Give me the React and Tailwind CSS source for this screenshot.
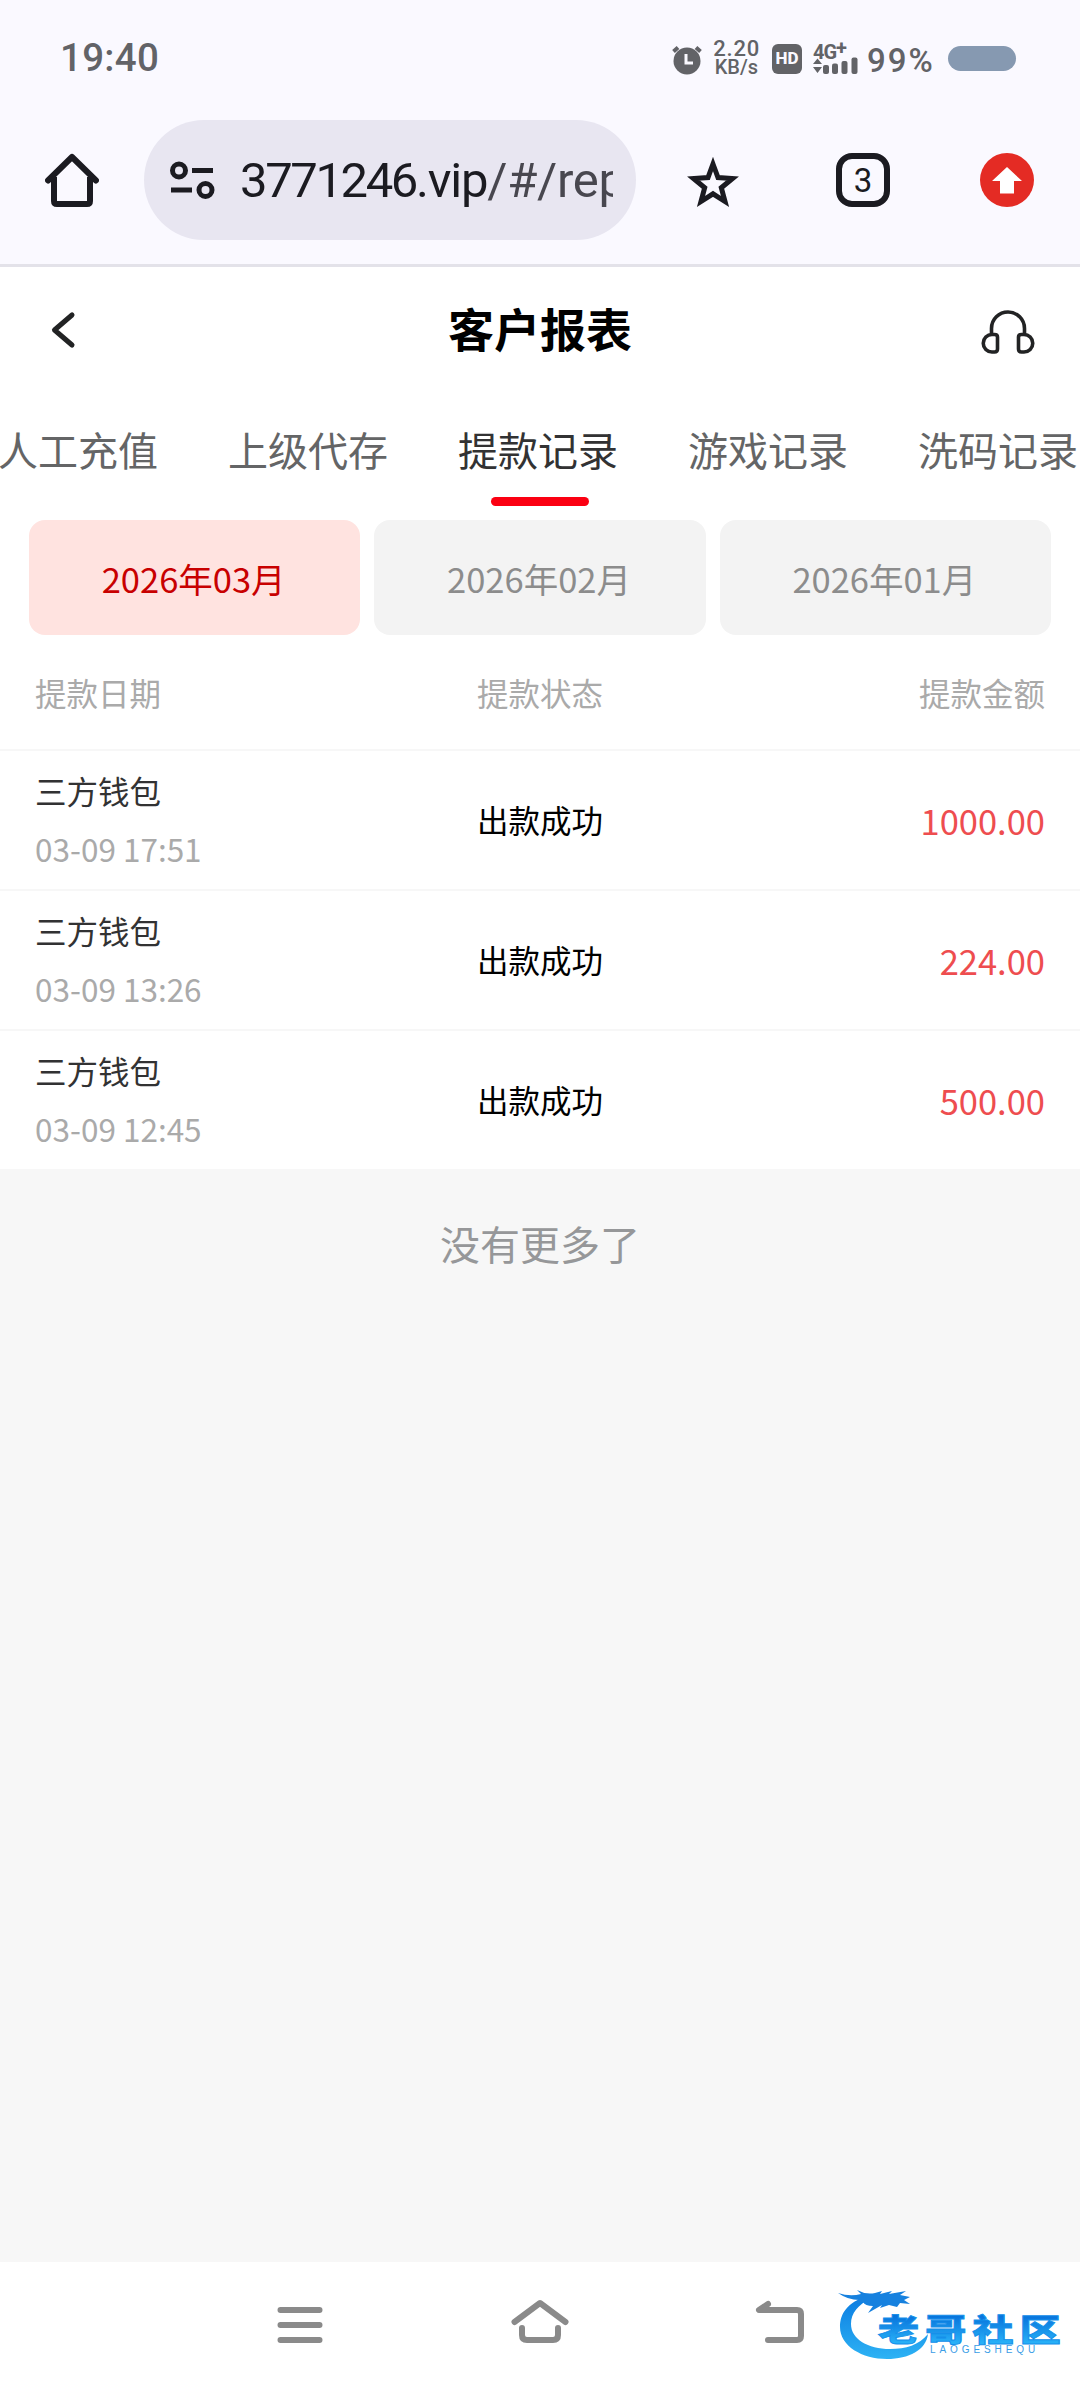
import React, { useState } from 'react';

const tabs = ['人工充值', '上级代存', '提款记录', '游戏记录', '洗码记录'];
const months = ['2026年03月', '2026年02月', '2026年01月'];
const records = [
    { id: 1, name: '三方钱包', time: '03-09 17:51', status: '出款成功', amount: 1000 },
    { id: 2, name: '三方钱包', time: '03-09 13:26', status: '出款成功', amount: 224 },
    { id: 3, name: '三方钱包', time: '03-09 12:45', status: '出款成功', amount: 500 },
];

const StatusBar = () => (
    <div className="flex h-[120px] items-start justify-between pl-[60px] pr-16 text-[#626367]">
        <span className="mt-[35px] text-[38.5px] leading-[46px] font-medium tracking-[0.3px]">19:40</span>
        <div className="mt-[37px] flex h-11 items-start">
            <svg className="mt-2 h-[30px] w-[30px]" viewBox="0 0 30 30" fill="none">
                <circle cx="15" cy="16" r="13.5" fill="currentColor" />
                <path d="M1.5 6.5 6 2.5M28.5 6.5 24 2.5" stroke="currentColor" strokeWidth="4" />
                <path d="M14 9v9h7" stroke="#faf9ff" strokeWidth="3" />
            </svg>
            <div className="mt-0.5 ml-[11px] w-[47px] text-right text-[22px] leading-[19px] font-medium">
                <div className="tracking-[0.8px]">2.20</div>
                <div className="pr-0.5 text-[20px]">KB/s</div>
            </div>
            <div className="mt-[7px] ml-3 flex h-[30px] w-[30px] items-center justify-center rounded-md bg-[#626367] text-[17px] font-extrabold text-[#faf9ff]">
                HD
            </div>
            <div className="ml-[11px] w-[46px]">
                <div className="mt-[5px] h-[18px] text-[20px] leading-[20px] font-bold tracking-[-1px]">
                    4G<span className="relative -top-1">+</span>
                </div>
                <svg className="-mt-1 h-[19px] w-[46px]" viewBox="0 0 46 19" fill="currentColor">
                    <path d="M0 8 4.5 2.5 9 8ZM0 11h9L4.5 17Z" />
                    <rect x="10" y="9" width="6" height="9" rx="2" />
                    <rect x="19" y="7.5" width="6" height="10.5" rx="2" />
                    <rect x="28.5" y="5" width="6" height="13" rx="2" />
                    <rect x="38.5" y="1.5" width="6" height="16.5" rx="2" />
                </svg>
            </div>
            <span className="ml-2 w-[71px] text-[33px] leading-[48px] font-medium tracking-[2px]">99%</span>
            <div className="mt-[9px] ml-2.5 h-[25px] w-[68px] rounded-full bg-[#8699b1]" />
        </div>
    </div>
);

const AddressBar = () => (
    <div className="flex h-36 items-start pl-[45px]">
        <svg className="mt-[33px] h-[54px] w-[54px]" viewBox="0 0 54 54" fill="none" stroke="#1b1b21" strokeWidth="6">
            <path d="M9 24v24q0 3 3 3h30q3 0 3-3V24" />
            <path d="M3 27.5 27 4l24 23.5" strokeLinecap="round" strokeLinejoin="round" />
        </svg>
        <div className="ml-[45px] flex h-[120px] w-[492px] items-center rounded-full bg-[#e8e6f1] pl-[25px]">
            <svg className="h-10 w-[46px] shrink-0" viewBox="0 0 46 40" fill="none" stroke="#1b1b21" strokeWidth="5">
                <circle cx="10" cy="10.5" r="6.5" />
                <path d="M23 10.5h21M2 30h21" />
                <circle cx="36.5" cy="30" r="6.5" />
            </svg>
            <div className="ml-[25px] w-[373px] overflow-hidden pt-0.5 text-[49px] leading-[60px] whitespace-nowrap text-[#1b1b21]">
                <span className="tracking-[-2.4px]">3771246</span>
                <span className="tracking-[-1.2px]">.vip</span>
                <span className="tracking-[-0.3px] text-[#48474f]">/#/rep</span>
            </div>
        </div>
        <svg className="mt-9 ml-[50px] h-[54px] w-[54px]" viewBox="0 0 54 54" fill="none" stroke="#1b1b21" strokeWidth="5">
            <path d="m27 8 5 13.5 14.5 1-11.2 9.2L39 45.5 27 37.8 15 45.5l3.7-13.8L7.5 22.5l14.5-1Z" />
        </svg>
        <div className="mt-[33px] ml-24 flex h-[54px] w-[54px] items-center justify-center rounded-2xl border-[6px] border-[#1b1b21] pt-0.5 text-[33px] text-[#1b1b21]">
            3
        </div>
        <svg className="mt-[33px] ml-[90px] h-[54px] w-[54px]" viewBox="0 0 54 54">
            <circle cx="27" cy="27" r="27" fill="#e42b24" />
            <path d="M27 14 42 28h-8v12.5H20V28h-8Z" fill="#fff" />
        </svg>
    </div>
);

const PageHeader = () => (
    <header className="flex h-[126px] items-center justify-between px-[45px]">
        <svg className="h-10 w-[54px]" viewBox="0 0 54 40" fill="none" stroke="#222324" strokeWidth="5">
            <path d="M27 5 9.5 20 27 35" strokeLinecap="round" strokeLinejoin="round" />
        </svg>
        <h1 className="-mt-1.5 text-[46px] leading-[60px] font-bold text-black">客户报表</h1>
        <svg className="mt-1 h-[44px] w-[54px]" viewBox="0 0 54 44" fill="none" stroke="#222324" strokeWidth="3.6">
            <path d="M10.5 24.5V18.5a16.5 16.5 0 0 1 33 0v6" />
            <path d="M16.5 27v12q0 3-3 3h-2.5a8.7 8.7 0 0 1 0-17.5h2.5q3 0 3 2.5ZM37.5 27v12q0 3 3 3H43a8.7 8.7 0 0 0 0-17.5h-2.5q-3 0-3 2.5Z" />
        </svg>
    </header>
);

// 社区标志:龙形圆环 + 渐变文字
const CommunityLogo = () => (
    <svg className="h-[126px] w-[260px]" viewBox="0 0 260 126">
        <defs>
            <linearGradient id="ring" x1="0" y1="30" x2="0" y2="100" gradientUnits="userSpaceOnUse">
                <stop offset="0" stopColor="#0878e0" />
                <stop offset="1" stopColor="#2fb5f5" />
            </linearGradient>
            <linearGradient id="word" x1="0" y1="0" x2="0" y2="1">
                <stop offset="0.25" stopColor="#0874dc" />
                <stop offset="0.85" stopColor="#28b0f7" />
            </linearGradient>
        </defs>
        <path
            d="M48 34C27 40 20 52 20 65c0 19 22 32 47 32 22 0 39-9 41-25-9 11-22 15-38 15-22 0-39-10-39-25 0-11 7-19 20-26Z"
            fill="url(#ring)"
        />
        <path
            d="M18 31Q30 35 41 32L37 28Q46 33 55 31L62 29 60 32 72 29 69 32 86 29 80 33 90 35 84 38 90 42 80 41 77 45 69 43 60 46 62 43 48 51 53 44Q45 44 43 40L34 42 39 38Q28 38 18 31Z"
            fill="#1681df"
        />
        <g transform="translate(58 79) scale(1 .75)">
            <text
                fill="url(#word)"
                stroke="#1590ea"
                strokeWidth="1.2"
                fontSize="41"
                fontWeight="900"
                letterSpacing="6.3"
                fontFamily="'Noto Sans CJK SC', sans-serif"
            >
                老哥社区
            </text>
        </g>
        <text x="110" y="91" fontSize="10" letterSpacing="3.9" fill="#3a9de6" fontFamily="'Liberation Sans', sans-serif">
            LAOGESHEQU
        </text>
    </svg>
);

const SystemNav = () => (
    <nav className="flex h-[126px] shrink-0 items-center bg-white pl-[270px] text-[#8a8a8a]">
        <svg className="h-[60px] w-[60px] shrink-0" viewBox="0 0 60 60" fill="none" stroke="currentColor" strokeWidth="6" strokeLinecap="round">
            <path d="M10.5 15h39M10.5 30h39M10.5 45h39" />
        </svg>
        <svg className="ml-[180px] h-[60px] w-[60px] shrink-0" viewBox="0 0 60 60" fill="none" stroke="currentColor" strokeWidth="6" strokeLinecap="round" strokeLinejoin="round">
            <path d="M4.5 27 30 8l25.5 19" />
            <path d="M12 33v7q0 5 5 5h26q5 0 5-5v-7" />
        </svg>
        <svg className="ml-[180px] h-[60px] w-[60px] shrink-0" viewBox="0 0 60 60" fill="none" stroke="currentColor" strokeWidth="6" strokeLinecap="round" strokeLinejoin="round">
            <path d="M18 9 9 15h38q4 0 4 4v22q0 4-4 4H18" />
        </svg>
        <div className="ml-[10px] shrink-0">
            <CommunityLogo />
        </div>
    </nav>
);

export default function App() {
    const [activeTab, setActiveTab] = useState(2);
    const [activeMonth, setActiveMonth] = useState(0);

    return (
        <div className="flex h-[2388px] w-[1080px] flex-col overflow-hidden bg-[#f7f7f7] font-['Noto_Sans_CJK_SC',sans-serif]">
            <div className="h-[267px] shrink-0 border-b-[3px] border-[#e3e2e9] bg-[#faf9ff] font-[Roboto,sans-serif]">
                <StatusBar />
                <AddressBar />
            </div>

            <div className="bg-white">
                <PageHeader />

                <div className="flex h-[127px] justify-center gap-[70px]">
                    {tabs.map((tab, index) => (
                        <button
                            key={tab}
                            onClick={() => setActiveTab(index)}
                            className={`flex w-40 shrink-0 flex-col items-center pt-[26px] text-[40px] leading-[60px] whitespace-nowrap ${index === activeTab ? 'text-[#323233]' : 'text-[#646566]'}`}
                        >
                            <span className="mr-1">{tab}</span>
                            {index === activeTab && <span className="mt-[18px] h-[9px] w-[98px] rounded-full bg-[#fb0012]" />}
                        </button>
                    ))}
                </div>

                <div className="grid grid-cols-3 gap-[14px] px-[29px]">
                    {months.map((month, index) => (
                        <button
                            key={month}
                            onClick={() => setActiveMonth(index)}
                            className={`h-[115px] rounded-2xl pt-[3px] pr-0.5 text-[34.5px] ${index === activeMonth ? 'bg-[#ffe3e0] text-[#c80000]' : 'bg-[#f3f3f3] text-[#8c8c8c]'}`}
                        >
                            {month}
                        </button>
                    ))}
                </div>

                <div className="grid h-[116px] grid-cols-3 border-b-2 border-[#f7f7f7] px-[35px] pt-[34px] text-[31.5px] leading-[46px] text-[#aaaaaa]">
                    <span>提款日期</span>
                    <span className="text-center">提款状态</span>
                    <span className="text-right">提款金额</span>
                </div>

                {records.map((record) => (
                    <div
                        key={record.id}
                        className="grid h-[140px] grid-cols-3 items-center border-b-2 border-[#f7f7f7] px-[35px] text-[31.5px] leading-[58px]"
                    >
                        <div className="-mt-[3px]">
                            <p className="text-[#323233]">{record.name}</p>
                            <p className="text-[#aaaaaa]">{record.time}</p>
                        </div>
                        <span className="-mt-0.5 text-center text-black">{record.status}</span>
                        <span className="text-right text-[34.5px] text-[#ee4d4f]">{record.amount.toFixed(2)}</span>
                    </div>
                ))}
            </div>

            <p className="mt-[42px] grow text-center text-[40px] leading-[60px] text-[#969799]">没有更多了</p>

            <SystemNav />
        </div>
    );
}
